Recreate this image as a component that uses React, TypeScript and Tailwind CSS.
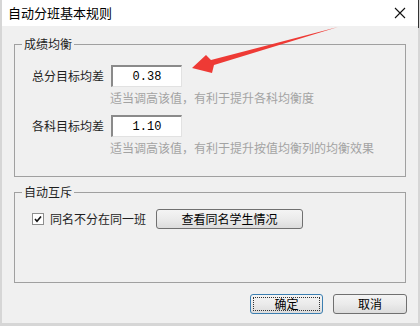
import type { ReactNode } from "react";

const cjk = { fontFamily: '"Microsoft YaHei", "Noto Sans CJK SC", sans-serif' };

function Group({ title, className, children }: { title: string; className?: string; children: ReactNode }) {
  return (
    <div className={"mx-[12px] border border-[#a0a0a0] px-[17px] " + (className ?? "")}>
      <div className="-mt-[9px] -ml-[10px] w-fit bg-[#f0f0f0] px-[2px] text-[12px] leading-[16px] text-[#1e1e1e]">{title}</div>
      {children}
    </div>
  );
}

function NumInput({ value }: { value: string }) {
  return (
    <div
      className="flex h-[22px] w-[71px] items-center justify-center border-t-[2px] border-l-[2px] border-r border-b border-t-[#8a8a8a] border-l-[#8a8a8a] border-r-[#e2e2e2] border-b-[#e2e2e2] bg-white text-[12px] text-black"
      style={{ fontFamily: '"Liberation Mono", monospace' }}
    >
      {value}
    </div>
  );
}

function Btn({ children, primary, className }: { children: ReactNode; primary?: boolean; className?: string }) {
  return (
    <button
      className={
        "flex h-[20px] items-center justify-center rounded-[3px] border bg-gradient-to-b from-[#f4f4f4] via-[#ebebeb] to-[#dcdcdc] text-[12px] text-black " +
        (primary ? "border-[#3c7fb1] " : "border-[#707070] ") +
        (className ?? "")
      }
    >
      {primary ? (
        <span className="flex h-[14px] w-[67px] items-center justify-center border border-dotted border-[#333]">{children}</span>
      ) : (
        children
      )}
    </button>
  );
}

export default function App() {
  return (
    <div className="relative h-[326px] w-[420px] overflow-hidden bg-[#d6d6d6]" style={cjk}>
      <div className="ml-[2px] flex h-[323px] w-[416px] flex-col bg-[#f0f0f0]">
        <div className="flex h-[26px] shrink-0 items-center justify-between bg-white pl-[6px] pr-[12px]">
          <span className="text-[13px] text-black">自动分班基本规则</span>
          <svg width="12" height="12" viewBox="0 0 12 12">
            <path d="M1 1 L11 11 M11 1 L1 11" stroke="#111" strokeWidth="1.1" />
          </svg>
        </div>

        <Group title="成绩均衡" className="mt-[18px] pb-[20px]">
          <div className="mt-[13px] flex items-center">
            <span className="w-[79px] text-[12px] text-[#1e1e1e]">总分目标均差</span>
            <NumInput value="0.38" />
          </div>
          <div className="ml-[78px] mt-[3px] text-[12px] leading-[16px] text-[#a3a3a3]">适当调高该值，有利于提升各科均衡度</div>
          <div className="mt-[9px] flex items-center">
            <span className="w-[79px] text-[12px] text-[#1e1e1e]">各科目标均差</span>
            <NumInput value="1.10" />
          </div>
          <div className="ml-[78px] mt-[3px] text-[12px] leading-[16px] text-[#a3a3a3]">适当调高该值，有利于提升按值均衡列的均衡效果</div>
        </Group>

        <Group title="自动互斥" className="mt-[15px] pb-[53px]">
          <div className="mt-[9px] flex items-center">
            <span className="flex h-[12px] w-[12px] items-center justify-center border border-[#8e8f8f] bg-white">
              <svg width="8" height="8" viewBox="0 0 8 8">
                <path d="M1 4 L3 6.3 L7 1.5" stroke="#111" strokeWidth="1.6" fill="none" />
              </svg>
            </span>
            <span className="ml-[6px] text-[12px] text-[#1e1e1e]">同名不分在同一班</span>
            <Btn className="ml-[10px] w-[147px]">查看同名学生情况</Btn>
          </div>
        </Group>

        <div className="mr-[11px] mt-[11px] flex justify-end gap-[10px]">
          <Btn primary className="w-[73px]">确定</Btn>
          <Btn className="w-[74px]">取消</Btn>
        </div>
      </div>

      <div className="absolute right-[1px] top-0 h-[28px] w-[1px] bg-[#333]" />

      <svg className="absolute left-0 top-0" width="420" height="326" viewBox="0 0 420 326">
        <polygon points="192,68 206,55 211,60 338,27 214,65 212,73" fill="#ee3a35" />
      </svg>
    </div>
  );
}
